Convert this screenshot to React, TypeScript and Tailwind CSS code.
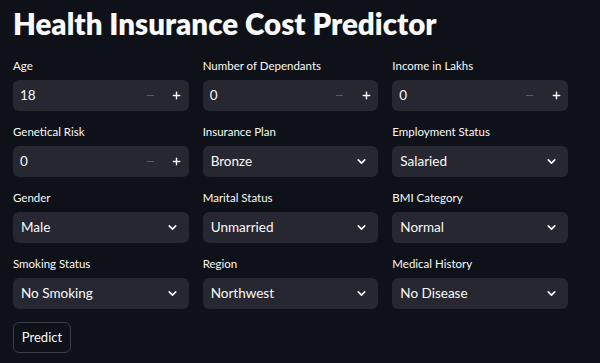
import { ChevronDown, Minus, Plus } from 'lucide-react'

type Field =
  | { kind: 'number'; label: string; value: string }
  | { kind: 'select'; label: string; value: string }

const rows: Field[][] = [
  [
    { kind: 'number', label: 'Age', value: '18' },
    { kind: 'number', label: 'Number of Dependants', value: '0' },
    { kind: 'number', label: 'Income in Lakhs', value: '0' },
  ],
  [
    { kind: 'number', label: 'Genetical Risk', value: '0' },
    { kind: 'select', label: 'Insurance Plan', value: 'Bronze' },
    { kind: 'select', label: 'Employment Status', value: 'Salaried' },
  ],
  [
    { kind: 'select', label: 'Gender', value: 'Male' },
    { kind: 'select', label: 'Marital Status', value: 'Unmarried' },
    { kind: 'select', label: 'BMI Category', value: 'Normal' },
  ],
  [
    { kind: 'select', label: 'Smoking Status', value: 'No Smoking' },
    { kind: 'select', label: 'Region', value: 'Northwest' },
    { kind: 'select', label: 'Medical History', value: 'No Disease' },
  ],
]

function FieldBox({ field }: { field: Field }) {
  return (
    <div className="flex flex-col">
      <label className="text-[11.5px] leading-[14px] text-[#fafafa] mb-[7px]">{field.label}</label>
      {field.kind === 'number' ? (
        <div className="h-[31px] rounded-[6px] bg-[#262730] flex items-center pl-[7px] pr-[6px]">
          <span className="flex-1 text-[13.5px] text-[#fafafa]">{field.value}</span>
          <button className="w-[26px] h-full flex items-center justify-start text-[#5c5e68]">
            <Minus size={11} strokeWidth={2} />
          </button>
          <button className="w-[12px] h-full flex items-center justify-center text-[#fafafa]">
            <Plus size={11} strokeWidth={3} />
          </button>
        </div>
      ) : (
        <div className="h-[31px] rounded-[6px] bg-[#262730] flex items-center pl-[8px] pr-[10px]">
          <span className="flex-1 text-[13.5px] text-[#fafafa]">{field.value}</span>
          <ChevronDown size={13} strokeWidth={3} className="text-[#fafafa]" />
        </div>
      )}
    </div>
  )
}

export default function App() {
  return (
    <div
      className="min-h-[363px] w-full bg-[#0e1117] pl-[13px] pr-[32px] pt-[4px]"
      style={{ fontFamily: 'Lato, sans-serif' }}
    >
      <h1 className="text-[29.5px] leading-[40px] font-extrabold text-[#fafafa]">
        Health Insurance Cost Predictor
      </h1>
      <div className="mt-[15px] flex flex-col gap-[14px]">
        {rows.map((row, i) => (
          <div key={i} className="grid grid-cols-3 gap-[14px]">
            {row.map(f => (
              <FieldBox key={f.label} field={f} />
            ))}
          </div>
        ))}
      </div>
      <button className="mt-[13px] h-[31px] w-[58px] rounded-[6px] border border-[#3b3d46] text-[13px] text-[#fafafa] bg-[#0e1117]">
        Predict
      </button>
    </div>
  )
}
